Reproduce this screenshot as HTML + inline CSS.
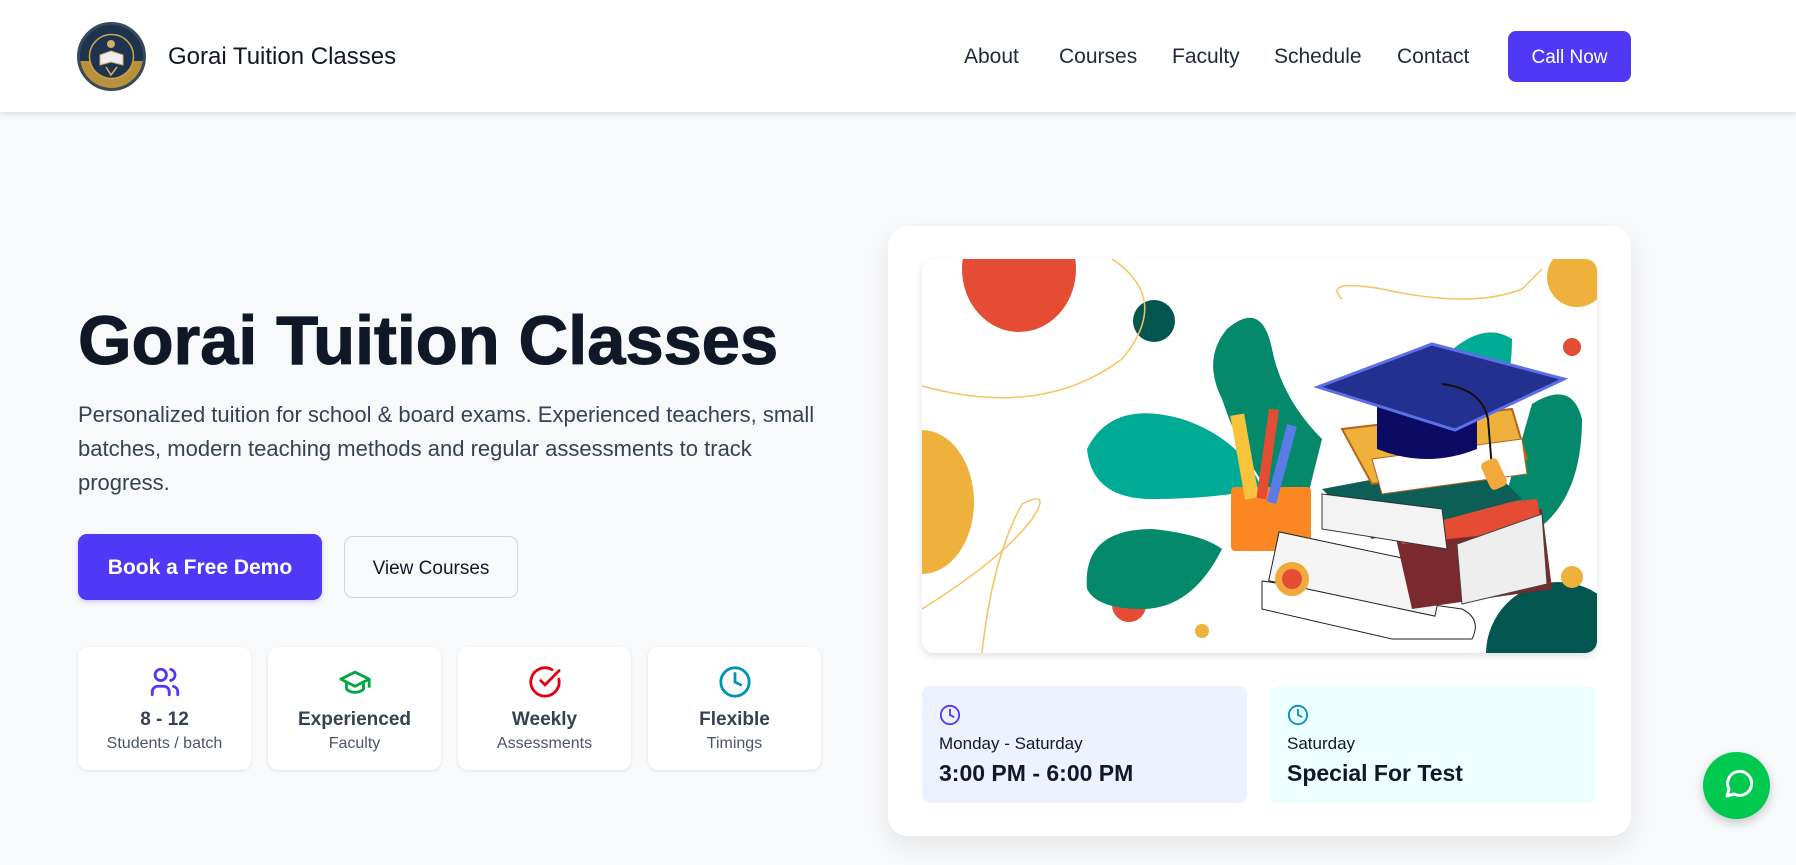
<!DOCTYPE html>
<html><head><meta charset="utf-8"><style>
*{box-sizing:border-box;margin:0;padding:0}
body{width:1796px;height:865px;overflow:hidden;background:#f8f9fb;font-family:"Liberation Sans",sans-serif;color:#101828;position:relative}
.nav{position:absolute;left:0;top:0;width:1796px;height:112px;background:#fff;box-shadow:0 2px 6px rgba(0,0,0,.12)}
.logo{position:absolute;left:77px;top:22px;width:69px;height:69px;border-radius:50%;background:#1e3350;border:3px solid #3a4a5c;overflow:hidden}
.brand{position:absolute;left:168px;top:43px;font-size:24px;color:#101828}
.links a{position:absolute;top:45px;font-size:21px;color:#1e2939;text-decoration:none}
.call{position:absolute;left:1508px;top:31px;width:123px;height:51px;border-radius:8px;background:#4f39f6;color:#fff;font-size:19px;text-align:center;line-height:53px}
h1{position:absolute;left:78px;top:301px;font-size:69px;font-weight:900;color:#101828;letter-spacing:-.2px;white-space:nowrap;-webkit-text-stroke:1px #101828}
.p{position:absolute;left:78px;top:398px;width:748px;font-size:22px;line-height:34px;color:#364153}
.b1{position:absolute;left:78px;top:534px;width:244px;height:66px;border-radius:9px;background:#4f39f6;color:#fff;font-size:21px;font-weight:600;text-align:center;line-height:68px;box-shadow:0 2px 4px rgba(79,57,246,.25)}
.b2{position:absolute;left:344px;top:536px;width:174px;height:62px;border-radius:9px;border:1px solid #d1d5dc;background:#f8f9fb;color:#101828;font-size:19px;text-align:center;line-height:64px}
.st{position:absolute;top:647px;width:173px;height:123px;background:#fff;border-radius:10px;box-shadow:0 1px 3px rgba(0,0,0,.1);text-align:center}
.st svg{position:absolute;left:70px;top:18px}
.st b{position:absolute;left:0;right:0;top:62px;font-size:19px;color:#364153}
.st span{position:absolute;left:0;right:0;top:88px;font-size:16px;color:#4a5565}
.card{position:absolute;left:888px;top:226px;width:743px;height:610px;background:#fff;border-radius:20px;box-shadow:0 10px 25px rgba(0,0,0,.08)}
.img{position:absolute;left:34px;top:33px;width:675px;height:394px;border-radius:12px;overflow:hidden;background:#fff;box-shadow:0 3px 8px rgba(0,0,0,.12)}
.ib{position:absolute;top:460px;width:325px;height:117px;border-radius:8px}
.ib svg{position:absolute;left:17px;top:18px}
.ib .d{position:absolute;left:17px;top:48px;font-size:17px;color:#101828}
.ib .t{position:absolute;left:17px;top:74px;font-size:23px;font-weight:600;color:#101828}
.wa{position:absolute;left:1703px;top:752px;width:67px;height:67px;border-radius:50%;background:#00c950;box-shadow:0 4px 10px rgba(0,0,0,.2)}
</style></head><body>
<div class="nav">
 <div class="logo"><svg width="63" height="63" viewBox="0 0 63 63"><rect x="0" y="36" width="63" height="27" fill="#b8913a"/><circle cx="31.5" cy="31.5" r="22" fill="#1e3350" stroke="#c9a24a" stroke-width="1.5"/><path d="M20 30 L31 26 L43 30 L43 40 L31 37 L20 40Z" fill="#eee" stroke="#d4b060"/><circle cx="31" cy="19" r="4" fill="#d4b060"/><path d="M26 42 L31 50 L37 42" fill="none" stroke="#d4b060" stroke-width="1.5"/></svg></div>
 <div class="brand">Gorai Tuition Classes</div>
 <div class="links"><a style="left:964px">About</a><a style="left:1059px">Courses</a><a style="left:1172px">Faculty</a><a style="left:1274px">Schedule</a><a style="left:1397px">Contact</a></div>
 <div class="call">Call Now</div>
</div>
<h1>Gorai Tuition Classes</h1>
<div class="p">Personalized tuition for school &amp; board exams. Experienced teachers, small batches, modern teaching methods and regular assessments to track progress.</div>
<div class="b1">Book a Free Demo</div>
<div class="b2">View Courses</div>

<div class="st" style="left:78px"><svg width="34" height="34" viewBox="0 0 24 24" fill="none" stroke="#4f39f6" stroke-width="2" stroke-linecap="round"><circle cx="9" cy="7" r="4"/><path d="M3 21v-2a4 4 0 0 1 4-4h4a4 4 0 0 1 4 4v2"/><path d="M16 3.1a4 4 0 0 1 0 7.8"/><path d="M21 21v-2a4 4 0 0 0-3-3.9"/></svg><b>8 - 12</b><span>Students / batch</span></div>
<div class="st" style="left:268px"><svg width="34" height="34" viewBox="0 0 24 24" fill="none" stroke="#00a63e" stroke-width="2" stroke-linejoin="round"><path d="M22 10L12 5 2 10l10 5 10-5z"/><path d="M6 12v5c3 3 9 3 12 0v-5"/><path d="M22 10v6"/></svg><b>Experienced</b><span>Faculty</span></div>
<div class="st" style="left:458px"><svg width="34" height="34" viewBox="0 0 24 24" fill="none" stroke="#e7000b" stroke-width="2" stroke-linecap="round"><path d="M21.8 10A10 10 0 1 1 17 3.3"/><path d="M9 11l3 3L22 4"/></svg><b>Weekly</b><span>Assessments</span></div>
<div class="st" style="left:648px"><svg width="34" height="34" viewBox="0 0 24 24" fill="none" stroke="#0092b8" stroke-width="2" stroke-linecap="round"><circle cx="12" cy="12" r="10"/><path d="M12 6v6l4 2"/></svg><b>Flexible</b><span>Timings</span></div>

<div class="card">
 <div class="img"><svg width="675" height="394" viewBox="0 0 675 394">
  <ellipse cx="97" cy="10" rx="57" ry="63" fill="#e44d33"/>
  <ellipse cx="0" cy="243" rx="52" ry="72" fill="#eeb13b"/>
  <circle cx="232" cy="62" r="21" fill="#03564f"/>
  <circle cx="655" cy="18" r="30" fill="#eeb13b"/>
  <circle cx="636" cy="395" r="72" fill="#02564f"/>
  <circle cx="207" cy="346" r="17" fill="#e44d33"/>
  <circle cx="650" cy="88" r="9" fill="#e44d33"/>
  <circle cx="650" cy="318" r="11" fill="#eeb13b"/>
  <circle cx="280" cy="372" r="7" fill="#eeb13b"/>
  <path d="M0 127 Q120 160 200 100 Q250 40 190 0" fill="none" stroke="#f8c260" stroke-width="1.5"/>
  <path d="M0 350 Q80 300 110 260 Q130 230 100 245 Q70 300 60 394" fill="none" stroke="#f8c260" stroke-width="1.5"/>
  <path d="M420 40 Q400 20 460 30 Q550 50 600 30 L620 10" fill="none" stroke="#f8c260" stroke-width="1.5"/>
  <path d="M305 70 Q340 40 350 90 Q360 140 400 180 L380 260 Q330 230 300 140 Q280 100 305 70Z" fill="#048a6b"/>
  <path d="M520 100 Q560 60 590 80 Q590 140 560 150 L520 150Z" fill="#00ab96"/>
  <path d="M610 145 Q650 120 660 160 Q660 250 600 280 L580 250Z" fill="#048a6b"/>
  <path d="M165 190 Q190 140 260 160 Q320 180 340 230 Q290 240 230 240 Q170 240 165 190Z" fill="#00ab96"/>
  <path d="M165 330 Q160 270 230 270 Q280 275 300 290 Q270 350 220 350 Q175 350 165 330Z" fill="#048a6b"/>
  <rect x="309" y="228" width="80" height="64" rx="4" fill="#fb8723"/>
  <rect x="316" y="155" width="14" height="85" fill="#f6c33a" transform="rotate(-10 323 200)"/>
  <rect x="340" y="150" width="10" height="90" fill="#e44d33" transform="rotate(8 345 200)"/>
  <rect x="356" y="165" width="10" height="80" fill="#5b7be6" transform="rotate(15 360 200)"/>
  <path d="M340 322 L540 350 Q560 360 550 380 L470 380 L340 350Z" fill="#fff" stroke="#222"/>
  <rect x="350" y="290" width="170" height="50" fill="#f5f5f5" stroke="#222" transform="rotate(12 435 315)"/>
  <circle cx="370" cy="320" r="17" fill="#f0a93a"/><circle cx="370" cy="320" r="10" fill="#e44d33"/>
  <path d="M470 262 L620 250 L630 330 L490 350Z" fill="#7a2a2e"/>
  <path d="M470 255 L615 240 L620 270 L480 285Z" fill="#e44d33"/>
  <path d="M535 285 L620 255 L625 325 L540 345Z" fill="#eee" stroke="#444"/>
  <path d="M400 230 L560 200 L600 240 L450 280 Z" fill="#0c5e57"/>
  <path d="M400 235 L520 250 L525 290 L400 270Z" fill="#f3f3f3" stroke="#333"/>
  <path d="M420 170 L590 150 L605 200 L450 225 Z" fill="#eeb13b" stroke="#b8621a" stroke-width="2"/>
  <path d="M450 200 L600 180 L605 215 L460 235Z" fill="#fff" stroke="#b8621a"/>
  <path d="M455 140 L555 140 L555 190 Q505 210 455 190Z" fill="#0b0b63"/>
  <path d="M396 128 L510 85 L642 120 L533 171Z" fill="#23308f" stroke="#5c6ee8" stroke-width="3"/>
  <path d="M520 125 Q560 130 566 160 L570 210" fill="none" stroke="#111" stroke-width="2"/>
  <rect x="563" y="200" width="18" height="30" rx="5" fill="#f0a93a" transform="rotate(-25 572 215)"/>
 </svg></div>
 <div class="ib" style="left:34px;background:#eef2ff"><svg width="22" height="22" viewBox="0 0 24 24" fill="none" stroke="#4f39f6" stroke-width="2" stroke-linecap="round"><circle cx="12" cy="12" r="10"/><path d="M12 6v6l4 2"/></svg><div class="d">Monday - Saturday</div><div class="t">3:00 PM - 6:00 PM</div></div>
 <div class="ib" style="left:382px;background:#ecfeff"><svg width="22" height="22" viewBox="0 0 24 24" fill="none" stroke="#0092b8" stroke-width="2" stroke-linecap="round"><circle cx="12" cy="12" r="10"/><path d="M12 6v6l4 2"/></svg><div class="d">Saturday</div><div class="t">Special For Test</div></div>
</div>
<div class="wa"><svg width="67" height="67" viewBox="0 0 67 67" fill="none" stroke="#fff" stroke-width="3" stroke-linejoin="round"><path d="M24 44 L26 37 A12 12 0 1 1 31 42 Z"/></svg></div>
</body></html>
